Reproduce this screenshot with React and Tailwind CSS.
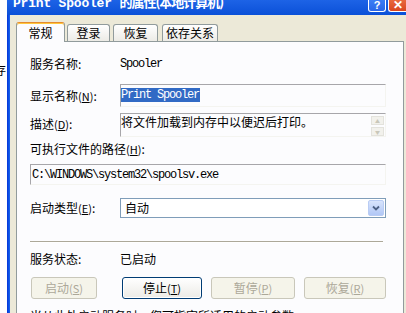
import React from "react";

const mono = "font-['Liberation_Mono','Noto_Sans_CJK_SC',monospace] tracking-[-1.2px]";

const tabs = [
  { name: "登录", w: "w-[43px] ml-[2px]" },
  { name: "恢复", w: "w-[45px] ml-[3px]" },
  { name: "依存关系", w: "w-[56px] ml-[4px]" },
];

function Key({ k }) {
  return (
    <span className="text-[11px]">
      (<u>{k}</u>)
    </span>
  );
}

function XpButton({ label, k, disabled, className }) {
  return (
    <button
      className={
        "h-[22px] shrink-0 rounded-[3px] border text-[12px] leading-[14px] " +
        (disabled
          ? "border-[#C9C7BA] bg-[#F5F4EA] text-[#ACA899] "
          : "border-[#003C74] bg-linear-to-b from-white to-[#ECEBE6] text-black shadow-[inset_0_0_0_1px_#FFF] ") +
        className
      }
    >
      {label}
      <Key k={k} />
    </button>
  );
}

export default function App() {
  return (
    <div className="flex w-[406px] h-[313px] overflow-hidden bg-white text-[12px] leading-[14px] text-black font-['Noto_Sans_CJK_SC',sans-serif]">
      {/* window behind */}
      <div className="w-[7px] shrink-0 overflow-hidden">
        <div className="mt-[63px] -ml-[6px] w-[12px]">存</div>
      </div>

      <div className="flex-1 min-w-0 flex flex-col">
        {/* Title bar */}
        <div className="h-[15px] shrink-0 flex bg-linear-to-b from-[#1D63E6] to-[#0A50D8] overflow-hidden">
          <div className="flex-1 pl-[6px] -mt-[7px] whitespace-nowrap text-white font-bold text-[13px] leading-[17px]">
            <span className="font-['Liberation_Mono',monospace] tracking-[-0.2px]">Print Spooler </span>
            <span className="tracking-[-1px]">的属性(本地计算机)</span>
          </div>
          <div className="flex items-start gap-[2px] pl-[2px]">
            <div className="w-[18px] h-[12px] rounded-b-[3px] border border-t-0 border-white bg-linear-to-b from-[#3C7EF5] to-[#2A66E8] flex items-end justify-center text-white font-bold text-[11px] leading-[11px] font-['Liberation_Sans',sans-serif]">
              ?
            </div>
            <div className="w-[18px] h-[12px] rounded-bl-[3px] border border-t-0 border-r-0 border-white bg-linear-to-b from-[#E8683E] to-[#D9451E] flex items-end justify-center text-white font-bold text-[12px] leading-[11px] font-['Liberation_Sans',sans-serif]">
              ✕
            </div>
          </div>
        </div>

        <div className="flex-1 flex min-h-0">
          {/* frame */}
          <div className="w-[3px] shrink-0 bg-linear-to-r from-[#0831D9] to-[#1A66EC]" />

          {/* Body */}
          <div className="flex-1 min-w-0 flex flex-col bg-[#ECE9D8] pl-[6px] pr-[2px] pt-[6px]">
            {/* Tabs */}
            <div className="h-[20px] shrink-0 flex items-end">
              <div className="relative z-10 w-[49px] h-[20px] -mb-px bg-[#FCFCFE] border border-b-0 border-[#919B9C] border-t-[#E68B2C] rounded-t-[3px] flex items-center justify-center shadow-[inset_0_1px_0_#FFC73C]">
                常规
              </div>
              {tabs.map((t) => (
                <div
                  key={t.name}
                  className={
                    t.w +
                    " h-[17px] shrink-0 bg-linear-to-b from-white to-[#ECEBE6] border border-b-0 border-[#919B9C] rounded-t-[3px] flex items-center justify-center"
                  }
                >
                  {t.name}
                </div>
              ))}
            </div>

            {/* Panel */}
            <div className="flex-1 flex flex-col border border-[#919B9C] bg-[#FCFCFE] pl-[13px]">
              <div className="mt-[15px] h-[14px] flex items-center">
                <div className="w-[90px]">服务名称:</div>
                <div className={mono}>Spooler</div>
              </div>

              <div className="mt-[13px] h-[23px] flex items-center">
                <div className="w-[90px]">
                  显示名称<Key k="N" />:
                </div>
                <div className="w-[266px] h-[23px] border-t border-l border-[#A7A6AA] border-r border-b border-r-[#F4F4F0] border-b-[#F4F4F0] pt-[1px]">
                  <span className={mono + " bg-[#316AC5] text-white pr-[1px]"}>Print Spooler</span>
                </div>
              </div>

              <div className="mt-[6px] h-[24px] flex items-start">
                <div className="w-[90px] pt-[4px]">
                  描述<Key k="D" />:
                </div>
                <div className="w-[266px] h-[24px] flex border-t border-l border-[#A7A6AA] border-r border-b border-r-[#F4F4F0] border-b-[#F4F4F0]">
                  <div className="flex-1 pt-[1px]">将文件加载到内存中以便迟后打印。</div>
                  <div className="w-[14px] flex flex-col gap-[2px] pt-[2px] pr-[1px]">
                    <div className="h-[9px] border border-[#E3E2DC] bg-[#F2F1EC] flex items-center justify-center text-[5px] leading-[5px] text-[#C9C7BA]">▲</div>
                    <div className="h-[9px] border border-[#E3E2DC] bg-[#F2F1EC] flex items-center justify-center text-[5px] leading-[5px] text-[#C9C7BA]">▼</div>
                  </div>
                </div>
              </div>

              <div className="mt-[5px] h-[14px]">
                可执行文件的路径<Key k="H" />:
              </div>

              <div className="mt-[8px] w-[356px] h-[21px] flex items-center pl-[1px] border-t border-l border-[#A7A6AA] border-r border-b border-r-[#F4F4F0] border-b-[#F4F4F0]">
                <span className={mono}>C:\WINDOWS\system32\spoolsv.exe</span>
              </div>

              <div className="mt-[13px] h-[20px] flex items-center">
                <div className="w-[90px]">
                  启动类型<Key k="E" />:
                </div>
                <div className="w-[266px] h-[20px] flex items-center border border-[#7F9DB9] bg-white pl-[4px] pr-[1px]">
                  <div className="flex-1">自动</div>
                  <div className="w-[16px] h-[16px] rounded-[2px] border border-[#B9CCF4] bg-linear-to-b from-[#D8E4FC] to-[#B1C7F6] flex items-center justify-center">
                    <svg width="8" height="6" viewBox="0 0 8 6">
                      <path d="M1 1.5 L4 4.5 L7 1.5" fill="none" stroke="#4D6185" strokeWidth="1.8" />
                    </svg>
                  </div>
                </div>
              </div>

              <div className="mt-[23px] w-[353px] h-[2px] border-t border-[#ACA899] border-b border-b-white" />

              <div className="mt-[9px] h-[14px] flex items-center">
                <div className="w-[90px]">服务状态:</div>
                <div>已启动</div>
              </div>

              <div className="mt-[11px] flex">
                <XpButton label="启动" k="S" disabled className="w-[66px] ml-[1px]" />
                <XpButton label="停止" k="T" className="w-[80px] ml-[25px]" />
                <XpButton label="暂停" k="P" disabled className="w-[84px] ml-[9px]" />
                <XpButton label="恢复" k="R" disabled className="w-[82px] ml-[9px]" />
              </div>

              <div className="mt-[10px] whitespace-nowrap">当从此处启动服务时，您可指定所适用的启动参数。</div>
            </div>
          </div>
        </div>
      </div>
    </div>
  );
}
